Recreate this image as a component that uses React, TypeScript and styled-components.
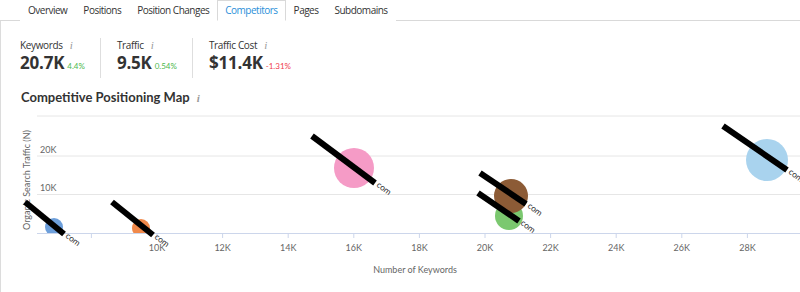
import React from 'react';
import styled, { createGlobalStyle } from 'styled-components';

const GlobalStyle = createGlobalStyle`
    html, body {
        margin: 0;
        padding: 0;
        background: #fff;
    }
    body {
        font-family: "Open Sans", Lato, Arial, sans-serif;
        color: #333;
    }
`;

const tabs = ['Overview', 'Positions', 'Position Changes', 'Competitors', 'Pages', 'Subdomains'];

const metrics = [
    { label: 'Keywords', value: '20.7K', change: '4.4%', up: true },
    { label: 'Traffic', value: '9.5K', change: '0.54%', up: true },
    { label: 'Traffic Cost', value: '$11.4K', change: '-1.31%', up: false },
];

// page coordinates, measured off the chart
const xPos = (k: number) => 157 + (k - 10) * 32.8;
const xTicks = [8, 10, 12, 14, 16, 18, 20, 22, 24, 26, 28];

const bubbles = [
    { cx: 54, cy: 223, r: 9, fill: '#6d9fdb' },
    { cx: 141, cy: 224, r: 9, fill: '#f0894a' },
    { cx: 354, cy: 164, r: 20, fill: '#f59bc6' },
    { cx: 509, cy: 212, r: 14, fill: '#7bc86f' },
    { cx: 511, cy: 192, r: 17, fill: '#8c5b36' },
    { cx: 767, cy: 156, r: 21, fill: '#a9d3ee' },
];

const labels = [
    { x1: 25, y1: 198, x2: 64, y2: 230 },
    { x1: 112, y1: 198, x2: 153, y2: 231 },
    { x1: 312, y1: 132, x2: 375, y2: 179 },
    { x1: 480, y1: 169, x2: 526, y2: 200 },
    { x1: 478, y1: 189, x2: 519, y2: 217 },
    { x1: 723, y1: 122, x2: 787, y2: 166 },
];

const InfoMark = () => <Info>i</Info>;

const App = () => {
    return (
        <Page>
            <GlobalStyle />
            <TabBar>
                {tabs.map((t) => (
                    <Tab key={t} active={t === 'Competitors'}>
                        {t}
                    </Tab>
                ))}
            </TabBar>
            <Content>
                <Metrics>
                    {metrics.map((m) => (
                        <Metric key={m.label}>
                            <MetricLabel>
                                {m.label}
                                <InfoMark />
                            </MetricLabel>
                            <MetricValue>
                                {m.value}
                                <Change up={m.up}>{m.change}</Change>
                            </MetricValue>
                        </Metric>
                    ))}
                </Metrics>
                <Title>
                    Competitive Positioning Map
                    <InfoMark />
                </Title>
                <Chart viewBox="1 106 799 186" width={799} height={186}>
                    <defs>
                        <clipPath id="plot">
                            <rect x={37} y={112} width={763} height={117} />
                        </clipPath>
                    </defs>
                    {[112, 152, 190.5].map((y) => (
                        <line key={y} x1={37} x2={800} y1={y} y2={y} stroke="#e6e6e6" strokeWidth={1} />
                    ))}
                    <line x1={37} x2={800} y1={229.5} y2={229.5} stroke="#ccd6eb" strokeWidth={1} />
                    {xTicks.map((k) => (
                        <line key={k} x1={xPos(k)} x2={xPos(k)} y1={229} y2={234} stroke="#ccd6eb" />
                    ))}
                    {xTicks
                        .filter((k) => k > 8)
                        .map((k) => (
                            <AxisText key={k} x={xPos(k)} y={247} textAnchor="middle">
                                {k}K
                            </AxisText>
                        ))}
                    <AxisText x={40} y={149}>20K</AxisText>
                    <AxisText x={40} y={187}>10K</AxisText>
                    <AxisText x={30} y={176} textAnchor="middle" transform="rotate(-90 30 176)">
                        Organic Search Traffic (N)
                    </AxisText>
                    <AxisText x={415} y={269} textAnchor="middle">
                        Number of Keywords
                    </AxisText>
                    <g clipPath="url(#plot)">
                        {bubbles.map((b, i) => (
                            <circle key={i} cx={b.cx} cy={b.cy} r={b.r} fill={b.fill} />
                        ))}
                    </g>
                    {labels.map((l, i) => (
                        <g key={i}>
                            <line x1={l.x1} y1={l.y1} x2={l.x2} y2={l.y2} stroke="#000" strokeWidth={6} />
                            <DataText
                                x={l.x2 + 1}
                                y={l.y2 + 3}
                                transform={`rotate(37 ${l.x2 + 1} ${l.y2 + 3})`}
                            >
                                com
                            </DataText>
                        </g>
                    ))}
                </Chart>
            </Content>
        </Page>
    );
};

export default App;

const Page = styled.div`
    width: 800px;
    height: 292px;
    overflow: hidden;
    display: flex;
    flex-direction: column;
`;

const TabBar = styled.div`
    display: flex;
    align-items: flex-end;
    height: 21px;
    padding-left: 20px;
    border-bottom: 1px solid #d9d9d9;
`;

const Tab = styled.div<{ active?: boolean }>`
    font-size: 10px;
    letter-spacing: -0.5px;
    line-height: 19px;
    padding: 0 7px;
    margin-bottom: -1px;
    color: ${(p) => (p.active ? '#2b8fd9' : '#333')};
    background: #fff;
    border: 1px solid ${(p) => (p.active ? '#d9d9d9' : 'transparent')};
    border-bottom-color: ${(p) => (p.active ? '#fff' : 'transparent')};
`;

const Content = styled.div`
    flex: 1;
    border-left: 1px solid #dcdcdc;
    display: flex;
    flex-direction: column;
`;

const Metrics = styled.div`
    display: flex;
    padding: 17px 0 0 19px;
`;

const Metric = styled.div`
    padding: 0 15px 0 16px;
    border-left: 1px solid #dedede;
    height: 40px;

    &:first-child {
        padding-left: 0;
        border-left: none;
    }
`;

const MetricLabel = styled.div`
    font-size: 10px;
    letter-spacing: -0.35px;
    line-height: 15px;
    color: #333;
`;

const Info = styled.span`
    font-family: "Liberation Serif", serif;
    font-style: italic;
    font-size: 11px;
    letter-spacing: 0;
    color: #999;
    margin-left: 7px;
`;

const MetricValue = styled.div`
    font-size: 17px;
    font-weight: 700;
    letter-spacing: -0.2px;
    line-height: 20px;
    color: #333;
    white-space: nowrap;
`;

const Change = styled.span<{ up: boolean }>`
    font-family: Lato, Arial, sans-serif;
    font-size: 8px;
    font-weight: 400;
    letter-spacing: 0;
    margin-left: 3px;
    color: ${(p) => (p.up ? '#4cb84c' : '#f03b4d')};
`;

const Title = styled.div`
    font-family: Lato, Arial, sans-serif;
    font-size: 13px;
    font-weight: 700;
    line-height: 18px;
    color: #333;
    padding: 10px 0 0 20px;
`;

const Chart = styled.svg`
    display: block;
    flex: none;
    margin-top: 3px;
`;

const AxisText = styled.text`
    font-family: Lato, Arial, sans-serif;
    font-size: 9px;
    fill: #666;
`;

const DataText = styled.text`
    font-family: Lato, Arial, sans-serif;
    font-size: 8.5px;
    fill: #333;
`;
